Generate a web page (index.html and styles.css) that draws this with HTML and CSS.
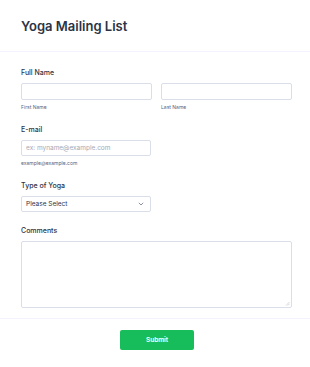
FILE: index.html
```html
<!DOCTYPE html>
<html lang="en">
<head>
    <meta charset="UTF-8">
    <meta name="viewport" content="width=device-width, initial-scale=1.0">
    <title>Yoga Mailing List</title>
    <link rel="stylesheet" href="styles.css">
</head>
<body>
    <form class="form">
        <div class="form-header">
            <h1>Yoga Mailing List</h1>
        </div>
        <div class="form-body">
            <div class="field">
                <label class="label">Full Name</label>
                <div class="name-row">
                    <div class="name-col">
                        <input type="text" class="input">
                        <span class="sublabel">First Name</span>
                    </div>
                    <div class="name-col">
                        <input type="text" class="input">
                        <span class="sublabel">Last Name</span>
                    </div>
                </div>
            </div>
            <div class="field">
                <label class="label">E-mail</label>
                <input type="text" class="input half" placeholder="ex: myname@example.com">
                <span class="sublabel">example@example.com</span>
            </div>
            <div class="field">
                <label class="label">Type of Yoga</label>
                <div class="select half">
                    <span>Please Select</span>
                    <svg width="6" height="4" viewBox="0 0 6 4"><path d="M0.8 0.8 L3 3 L5.2 0.8" fill="none" stroke="#7e8598" stroke-width="0.9"/></svg>
                </div>
            </div>
            <div class="field last">
                <label class="label">Comments</label>
                <div class="textarea">
                    <svg class="grip" width="5" height="5" viewBox="0 0 5 5"><path d="M1 4.5 L4.5 1 M2.8 4.5 L4.5 2.8" stroke="#b8bcc7" stroke-width="0.6"/></svg>
                </div>
            </div>
        </div>
        <div class="form-footer">
            <button type="button" class="submit">Submit</button>
        </div>
    </form>
</body>
</html>
```

FILE: styles.css
```css
body {
    margin: 0;
    padding: 0;
    background: #fff;
    font-family: Inter, "Noto Sans", sans-serif;
    color: #2c3345;
}

.form-header {
    padding: 16px 21px 15px;
    border-bottom: 1px solid #f3f3fe;
}

.form-header h1 {
    margin: 0;
    font-size: 13px;
    font-weight: 600;
    line-height: 20px;
    color: #2c3345;
}

.form-body {
    padding: 16px 18px 10px 21px;
}

.field {
    margin-bottom: 14px;
}

.field.last {
    margin-bottom: 0;
}

.label {
    display: block;
    font-size: 7px;
    font-weight: 500;
    color: #2c3345;
    line-height: 10px;
    margin-bottom: 5px;
}

.name-row {
    display: flex;
    gap: 9px;
}

.name-col {
    flex: 1;
    display: flex;
    flex-direction: column;
}

.input {
    display: block;
    box-sizing: border-box;
    height: 17px;
    width: 100%;
    border: 1px solid #dadee8;
    border-radius: 2px;
    padding: 0 4px;
    font-family: inherit;
    font-size: 6.5px;
    color: #2c3345;
    outline: none;
}

.input::placeholder {
    color: #a5a9b5;
}

.half {
    width: 130px;
    height: 16px;
}

.sublabel {
    display: block;
    font-size: 5px;
    color: #57647e;
    line-height: 8px;
    margin-top: 3px;
}

.select {
    box-sizing: border-box;
    height: 16px;
    border: 1px solid #dadee8;
    border-radius: 2px;
    padding: 0 6px 0 4px;
    display: flex;
    align-items: center;
    justify-content: space-between;
    font-size: 6.5px;
    color: #2c3345;
}

.textarea {
    box-sizing: border-box;
    height: 67px;
    border: 1px solid #dadee8;
    border-radius: 2px;
    position: relative;
}

.grip {
    position: absolute;
    right: 1px;
    bottom: 1px;
}

.form-footer {
    border-top: 1px solid #f3f3fe;
    padding: 11px 0 17px 4px;
    display: flex;
    justify-content: center;
}

.submit {
    width: 74px;
    height: 20px;
    border: none;
    border-radius: 2px;
    background: #18bd5b;
    color: #fff;
    font-family: inherit;
    font-size: 6.5px;
    font-weight: 600;
}
```
